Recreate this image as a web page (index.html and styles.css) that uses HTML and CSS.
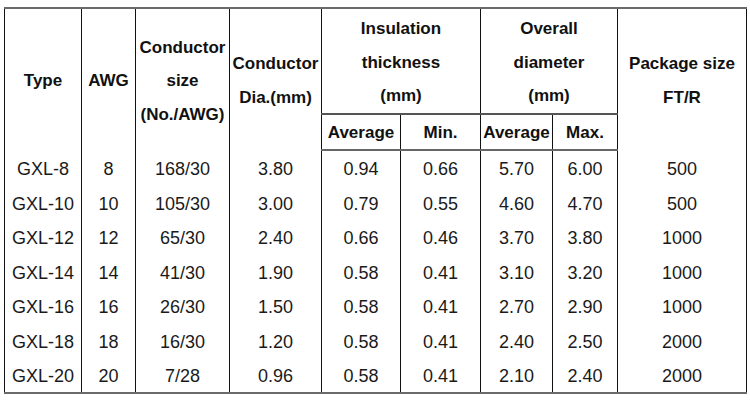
FILE: index.html
```html
<!DOCTYPE html>
<html>
<head>
<meta charset="utf-8">
<link rel="stylesheet" href="styles.css">
</head>
<body>
<table class="spec">
  <colgroup>
    <col class="c1"><col class="c2"><col class="c3"><col class="c4"><col class="c5"><col class="c6"><col class="c7"><col class="c8"><col class="c9">
  </colgroup>
  <thead>
    <tr class="h1">
      <th rowspan="2">Type</th>
      <th rowspan="2">AWG</th>
      <th rowspan="2">Conductor<br>size<br>(No./AWG)</th>
      <th rowspan="2">Conductor<br>Dia.(mm)</th>
      <th colspan="2">Insulation<br>thickness<br>(mm)</th>
      <th colspan="2">Overall<br>diameter<br>(mm)</th>
      <th rowspan="2">Package size<br>FT/R</th>
    </tr>
    <tr class="h2">
      <th>Average</th>
      <th>Min.</th>
      <th>Average</th>
      <th>Max.</th>
    </tr>
  </thead>
  <tbody>
    <tr><td>GXL-8</td><td>8</td><td>168/30</td><td>3.80</td><td>0.94</td><td>0.66</td><td>5.70</td><td>6.00</td><td>500</td></tr>
    <tr><td>GXL-10</td><td>10</td><td>105/30</td><td>3.00</td><td>0.79</td><td>0.55</td><td>4.60</td><td>4.70</td><td>500</td></tr>
    <tr><td>GXL-12</td><td>12</td><td>65/30</td><td>2.40</td><td>0.66</td><td>0.46</td><td>3.70</td><td>3.80</td><td>1000</td></tr>
    <tr><td>GXL-14</td><td>14</td><td>41/30</td><td>1.90</td><td>0.58</td><td>0.41</td><td>3.10</td><td>3.20</td><td>1000</td></tr>
    <tr><td>GXL-16</td><td>16</td><td>26/30</td><td>1.50</td><td>0.58</td><td>0.41</td><td>2.70</td><td>2.90</td><td>1000</td></tr>
    <tr><td>GXL-18</td><td>18</td><td>16/30</td><td>1.20</td><td>0.58</td><td>0.41</td><td>2.40</td><td>2.50</td><td>2000</td></tr>
    <tr><td>GXL-20</td><td>20</td><td>7/28</td><td>0.96</td><td>0.58</td><td>0.41</td><td>2.10</td><td>2.40</td><td>2000</td></tr>
  </tbody>
</table>
</body>
</html>
```
FILE: styles.css
```css
html, body {
  margin: 0;
  padding: 0;
  background: #ffffff;
}

.spec {
  margin: 7px 0 0 4px;
  width: 742px;
  table-layout: fixed;
  border-collapse: collapse;
  font-family: "Liberation Sans", Arial, sans-serif;
  color: #1a1a1a;
  border-top: 2px solid #6a6a6a;
  border-bottom: 2px solid #6a6a6a;
  border-left: 1px solid #111;
  border-right: 1px solid #111;
}

.c1 { width: 77px; }
.c2 { width: 54px; }
.c3 { width: 94px; }
.c4 { width: 92px; }
.c5 { width: 79px; }
.c6 { width: 80px; }
.c7 { width: 72px; }
.c8 { width: 65px; }
.c9 { width: 129px; }

.spec th,
.spec td {
  padding: 0;
  text-align: center;
  vertical-align: middle;
  border-left: 1px solid #111;
  border-right: 1px solid #111;
  white-space: nowrap;
}

.spec th {
  font-weight: bold;
  font-size: 17px;
  line-height: 33.5px;
  color: #111;
}

.h1 { height: 104px; }
.h1 th { padding-top: 3px; }
.h1 th[colspan] { border-bottom: 2px solid #555; }

.h2 { height: 36px; }
.h2 th {
  border-bottom: 2px solid #666;
  padding-top: 3px;
  line-height: 20px;
}

.spec td {
  font-size: 18px;
  line-height: 20px;
  height: 31.5px;
  padding-top: 3px;
}
```
